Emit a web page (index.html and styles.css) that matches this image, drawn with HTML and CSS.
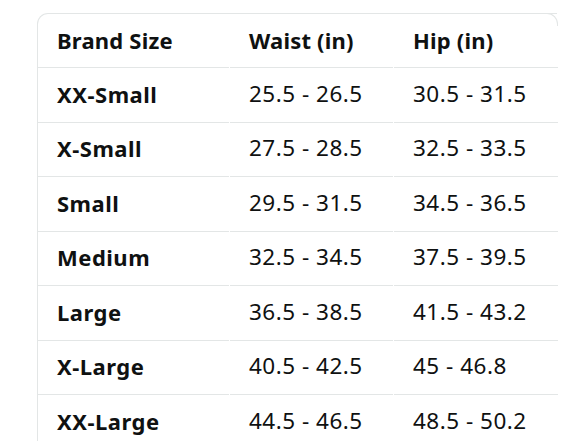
FILE: index.html
```html
<!DOCTYPE html>
<html lang="en">
<head>
<meta charset="utf-8">
<title>Size chart</title>
<link rel="stylesheet" href="styles.css">
</head>
<body>
<div class="chart">
  <table class="size-table">
    <colgroup>
      <col class="c1"><col class="c2"><col class="c3">
    </colgroup>
    <thead>
      <tr><th>Brand Size</th><th>Waist (in)</th><th>Hip (in)</th></tr>
    </thead>
    <tbody>
      <tr><th>XX-Small</th><td>25.5 - 26.5</td><td>30.5 - 31.5</td></tr>
      <tr><th>X-Small</th><td>27.5 - 28.5</td><td>32.5 - 33.5</td></tr>
      <tr><th>Small</th><td>29.5 - 31.5</td><td>34.5 - 36.5</td></tr>
      <tr><th>Medium</th><td>32.5 - 34.5</td><td>37.5 - 39.5</td></tr>
      <tr><th>Large</th><td>36.5 - 38.5</td><td>41.5 - 43.2</td></tr>
      <tr><th>X-Large</th><td>40.5 - 42.5</td><td>45 - 46.8</td></tr>
      <tr><th>XX-Large</th><td>44.5 - 46.5</td><td>48.5 - 50.2</td></tr>
    </tbody>
  </table>
</div>
</body>
</html>
```
FILE: styles.css
```css
html, body {
  margin: 0;
  padding: 0;
  background: #ffffff;
}

body {
  font-family: "Noto Sans", "Open Sans", sans-serif;
  color: #0f1111;
  overflow: hidden;
}

.chart {
  position: relative;
  margin: 13px 0 0 37px;
  width: 519px;
  border-top: 1px solid #e3e6e6;
  border-left: 1px solid #e3e6e6;
  border-top-left-radius: 11px;
}

.chart::after {
  content: "";
  position: absolute;
  top: -1px;
  right: -1px;
  width: 12px;
  height: 12px;
  border-top: 1px solid #e3e6e6;
  border-right: 1px solid #e3e6e6;
  border-top-right-radius: 11px;
}

.size-table {
  width: 521px;
  margin-left: -1px;
  table-layout: fixed;
  border-collapse: separate;
  border-spacing: 1px 0;
}

.c1 { width: 191px; }
.c2 { width: 163px; }
.c3 { width: 164px; }

.size-table th,
.size-table td {
  height: 51.5px;
  padding: 0 0 2px 19px;
  text-align: left;
  vertical-align: middle;
  font-size: 22.5px;
  line-height: 1;
  border-bottom: 1px solid #e3e6e6;
  white-space: nowrap;
}

.size-table th {
  font-weight: 700;
  font-size: 22px;
  letter-spacing: 0.5px;
}

.size-table td {
  font-weight: 400;
  letter-spacing: 0.5px;
}

.size-table thead th {
  height: 51px;
  letter-spacing: 0.2px;
}
```
